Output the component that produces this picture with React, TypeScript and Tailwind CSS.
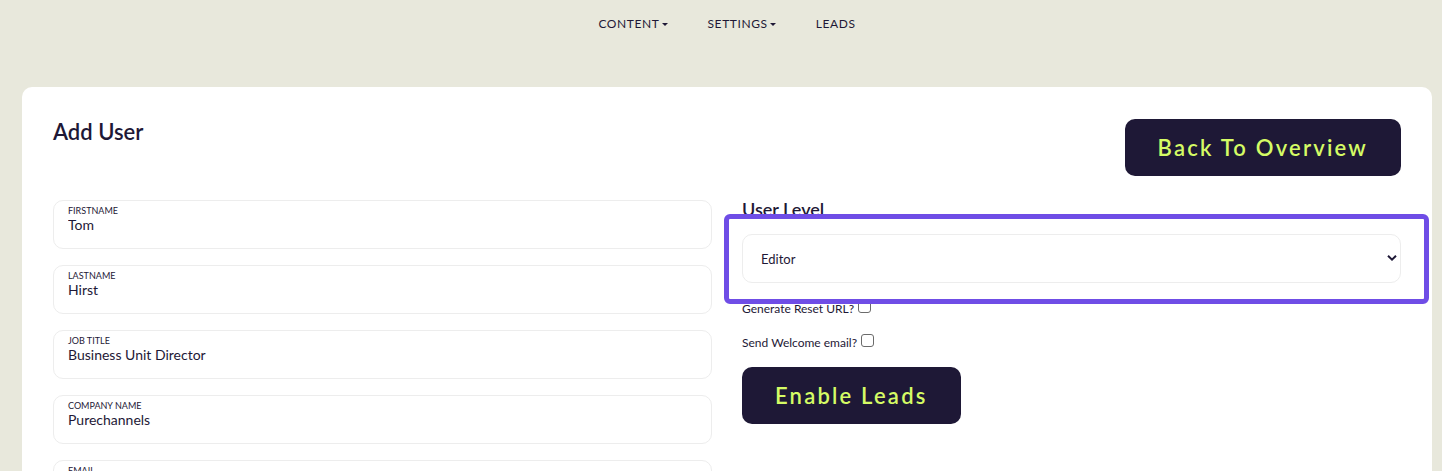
import { useState } from "react";

const menu = [
  { label: "CONTENT", dropdown: true },
  { label: "SETTINGS", dropdown: true },
  { label: "LEADS", dropdown: false },
];

const fields = [
  { id: "firstname", label: "FIRSTNAME", value: "Tom" },
  { id: "lastname", label: "LASTNAME", value: "Hirst" },
  { id: "job-title", label: "JOB TITLE", value: "Business Unit Director" },
  { id: "company", label: "COMPANY NAME", value: "Purechannels" },
  { id: "email", label: "EMAIL", value: "" },
];

function Caret() {
  return (
    <svg viewBox="0 0 6 3" className="h-[3px] w-1.5" aria-hidden="true">
      <path d="M0 0h6L3 3z" fill="currentColor" />
    </svg>
  );
}

function Field({ id, label, value }: { id: string; label: string; value: string }) {
  const [text, setText] = useState(value);
  return (
    <div className="flex h-[49px] flex-col rounded-[10px] border border-[#ededed] px-3.5 pt-1">
      <label htmlFor={id} className="text-[9px] leading-3">
        {label}
      </label>
      <input
        id={id}
        value={text}
        onChange={(e) => setText(e.target.value)}
        className="h-4 w-full bg-transparent text-sm leading-4 outline-none"
      />
    </div>
  );
}

function Check({ id, label }: { id: string; label: string }) {
  return (
    <div className="flex items-center gap-1 text-xs leading-4">
      <label htmlFor={id}>{label}</label>
      <input
        id={id}
        type="checkbox"
        className="mb-1 size-[13px] appearance-none rounded-[3px] border border-[#6b6b6b] bg-white checked:bg-[#1e1836]"
      />
    </div>
  );
}

export default function App() {
  return (
    <div className="min-h-screen bg-[#e8e8dc] pr-2.5 pl-[22px] font-['Lato',sans-serif] text-[#1e1836]">
      <nav className="flex h-[87px] items-start justify-center gap-10 pt-4 text-xs leading-4 tracking-wider">
        {menu.map((item) =>
          item.dropdown ? (
            <button key={item.label} type="button" className="flex items-center gap-0.5 tracking-wider">
              {item.label}
              <Caret />
            </button>
          ) : (
            <a key={item.label} href="#leads">
              {item.label}
            </a>
          ),
        )}
      </nav>

      <main className="rounded-t-[10px] bg-white px-[31px] pt-8">
        <header className="flex items-start justify-between">
          <h1 className="text-[22px] leading-[26px] font-semibold">Add User</h1>
          <button
            type="button"
            className="h-[57px] rounded-[10px] bg-[#1e1836] px-[33px] text-[22px] font-semibold tracking-widest text-[#d5fb65]"
          >
            Back To Overview
          </button>
        </header>

        <form className="mt-6 grid grid-cols-2 gap-[30px]">
          <div className="flex flex-col gap-4 pb-8">
            {fields.map((f) => (
              <Field key={f.id} {...f} />
            ))}
          </div>

          <div className="flex flex-col items-start">
            <label htmlFor="level" className="h-[34px] text-lg leading-[18px] font-semibold">
              User Level
            </label>
            <div className="relative w-full">
              <select
                id="level"
                className="block h-[49px] w-full appearance-none rounded-[10px] border border-[#ededed] bg-white px-[18px] pt-0.5 text-[13px]"
              >
                <option>Editor</option>
              </select>
              <svg
                viewBox="0 0 10 6"
                className="pointer-events-none absolute top-[21px] right-1 h-1.5 w-2.5"
                fill="none"
                stroke="currentColor"
                strokeWidth="2"
                aria-hidden="true"
              >
                <path d="M1 0.8L5 4.6L9 0.8" />
              </svg>
              <div className="pointer-events-none absolute -top-5 -right-7 -bottom-[21px] -left-[18px] rounded-md border-5 border-[#6f4de6]" />
            </div>
            <div className="mt-[17px] flex flex-col gap-[17px]">
              <Check id="reset" label="Generate Reset URL?" />
              <Check id="welcome" label="Send Welcome email?" />
            </div>
            <button
              type="button"
              className="mt-4 h-[57px] rounded-[10px] bg-[#1e1836] px-[33px] text-[22px] font-semibold tracking-widest text-[#d5fb65]"
            >
              Enable Leads
            </button>
          </div>
        </form>
      </main>
    </div>
  );
}
